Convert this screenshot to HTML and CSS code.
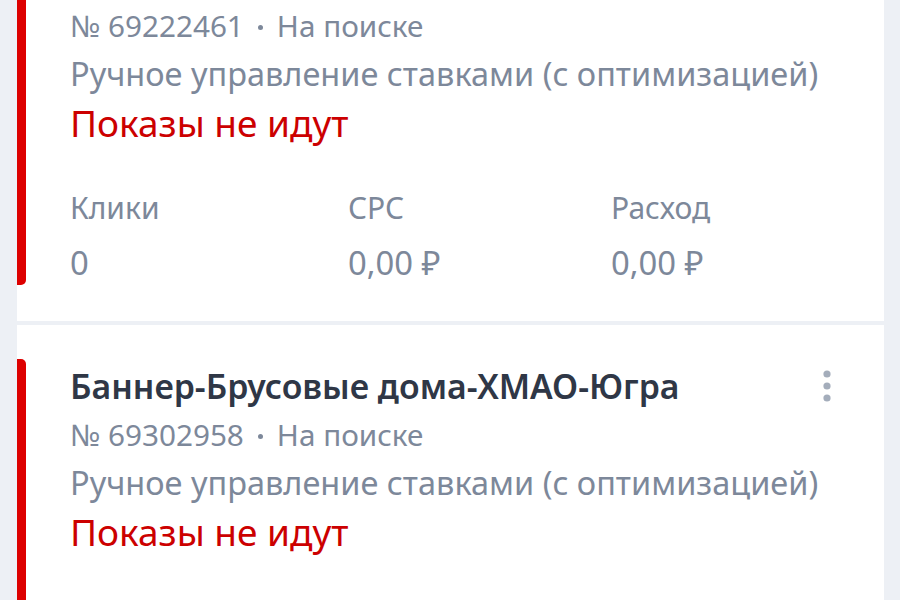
FILE: index.html
```html
<!DOCTYPE html>
<html lang="ru">
<head>
<meta charset="utf-8">
<link rel="stylesheet" href="styles.css">
</head>
<body>
<div class="list">
  <section class="card card-first">
    <div class="meta"><span>№ 69222461</span><span class="dot"></span><span>На поиске</span></div>
    <div class="strategy">Ручное управление ставками (с оптимизацией)</div>
    <div class="status">Показы не идут</div>
    <div class="stats">
      <div class="stat"><div class="stat-label">Клики</div><div class="stat-value">0</div></div>
      <div class="stat"><div class="stat-label">CPC</div><div class="stat-value">0,00 ₽</div></div>
      <div class="stat"><div class="stat-label">Расход</div><div class="stat-value">0,00 ₽</div></div>
    </div>
  </section>
  <section class="card card-second">
    <div class="title-row">
      <div class="title">Баннер-Брусовые дома-ХМАО-Югра</div>
      <svg class="more" width="10" height="34" viewBox="0 0 10 34"><circle cx="5" cy="5" r="3.6" fill="#a4adbb"/><circle cx="5" cy="17" r="3.6" fill="#a4adbb"/><circle cx="5" cy="29" r="3.6" fill="#a4adbb"/></svg>
    </div>
    <div class="meta"><span>№ 69302958</span><span class="dot"></span><span>На поиске</span></div>
    <div class="strategy">Ручное управление ставками (с оптимизацией)</div>
    <div class="status">Показы не идут</div>
  </section>
</div>
</body>
</html>
```
FILE: styles.css
```css
html, body {
  margin: 0;
  padding: 0;
  background: #edf0f5;
  font-family: "Noto Sans", Roboto, sans-serif;
  overflow: hidden;
}
.list {
  width: 867px;
  margin-left: 17px;
  display: flex;
  flex-direction: column;
  gap: 4px;
}
.card {
  background: #ffffff;
  position: relative;
  padding: 0 52px 34px 53px;
}
.card::before {
  content: "";
  position: absolute;
  left: 0;
  width: 9px;
  background: #dd0000;
}
.card-first::before {
  top: 0;
  bottom: 36px;
  border-radius: 0 0 5px 0;
}
.card-second {
  padding-top: 36px;
  height: 400px;
}
.card-second::before {
  top: 34px;
  bottom: 0;
  border-radius: 0 5px 0 0;
}
.card-first {
  padding-top: 2px;
}
.meta {
  font-size: 29.7px;
  line-height: 48px;
  color: #7d889a;
  display: flex;
  align-items: center;
}
.dot {
  width: 5px;
  height: 5px;
  border-radius: 50%;
  background: #7d889a;
  margin: 2px 14px 0 14px;
}
.strategy {
  font-size: 32.5px;
  line-height: 48px;
  color: #7d889a;
}
.status {
  font-size: 37px;
  line-height: 50px;
  margin-bottom: 2px;
  color: #cc0000;
}
.stats {
  display: grid;
  grid-template-columns: 278px 263px 1fr;
  margin-top: 36px;
}
.stat-label {
  font-size: 30px;
  line-height: 48px;
  color: #7d889a;
}
.stat-value {
  font-size: 32.8px;
  line-height: 48px;
  margin-top: 7px;
  color: #7d889a;
}
.title-row {
  display: flex;
  justify-content: space-between;
  align-items: center;
  height: 50px;
}
.title {
  font-size: 33.8px;
  font-weight: 600;
  color: #2f3746;
}
```
